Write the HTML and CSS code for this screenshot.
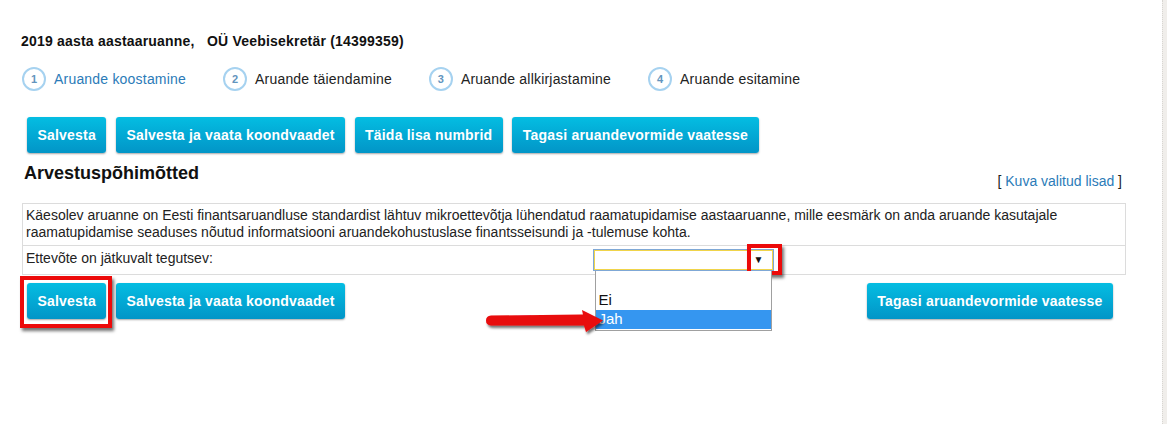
FILE: index.html
```html
<!DOCTYPE html>
<html lang="et">
<head>
<meta charset="utf-8">
<title>2019 aasta aastaaruanne</title>
<link rel="stylesheet" href="styles.css">
</head>
<body>
<div class="shell">
  <div class="main">
    <h1 class="title">2019 aasta aastaaruanne,&nbsp;&nbsp; OÜ Veebisekretär (14399359)</h1>
    <ol class="steps">
      <li class="step active"><span class="num">1</span>Aruande koostamine</li>
      <li class="step"><span class="num">2</span>Aruande täiendamine</li>
      <li class="step"><span class="num">3</span>Aruande allkirjastamine</li>
      <li class="step"><span class="num">4</span>Aruande esitamine</li>
    </ol>
    <div class="btnrow top">
      <button class="btn">Salvesta</button>
      <button class="btn">Salvesta ja vaata koondvaadet</button>
      <button class="btn">Täida lisa numbrid</button>
      <button class="btn">Tagasi aruandevormide vaatesse</button>
    </div>
    <div class="section-head">
      <h2 class="heading">Arvestuspõhimõtted</h2>
      <div class="lisad">[ <a href="#">Kuva valitud lisad</a> ]</div>
    </div>
    <table class="grid">
      <tr>
        <td colspan="2">Käesolev aruanne on Eesti finantsaruandluse standardist lähtuv mikroettevõtja lühendatud raamatupidamise aastaaruanne, mille eesmärk on anda aruande kasutajale raamatupidamise seaduses nõutud informatsiooni aruandekohustuslase finantsseisundi ja -tulemuse kohta.</td>
      </tr>
      <tr>
        <td class="label">Ettevõte on jätkuvalt tegutsev:</td>
        <td class="field">
          <div class="select-wrap">
            <div class="select"><span class="arrow">▼</span></div>
            <div class="arrow-hl"></div>
            <ul class="options">
              <li class="opt blank"></li>
              <li class="opt">Ei</li>
              <li class="opt sel">Jah</li>
            </ul>
          </div>
        </td>
      </tr>
    </table>
    <div class="btnrow bottom">
      <div class="hl-wrap">
        <button class="btn">Salvesta</button>
        <div class="btn-hl"></div>
      </div>
      <button class="btn">Salvesta ja vaata koondvaadet</button>
      <button class="btn push">Tagasi aruandevormide vaatesse</button>
      <svg class="pointer" width="130" height="42" viewBox="0 0 130 42">
        <defs>
          <filter id="sh" x="-10%" y="-30%" width="130%" height="170%">
            <feDropShadow dx="1.5" dy="2.5" stdDeviation="1.2" flood-color="#000" flood-opacity="0.55"/>
          </filter>
        </defs>
        <path filter="url(#sh)" fill="#e8080a" d="M8 15.5 L100 14.5 L99 10 L120 20.5 L103 32 L101 25.5 L8 25.5 Q3 25 3 20.5 Q3 16 8 15.5 Z"/>
      </svg>
    </div>
  </div>
  <div class="scroll"></div>
</div>
</body>
</html>
```
FILE: styles.css
```css
* { box-sizing: border-box; }
html, body { margin: 0; padding: 0; background: #fff; }
body {
  font-family: "Liberation Sans", Arial, sans-serif;
  color: #1a1a1a;
  height: 424px;
  overflow: hidden;
}
.shell { display: flex; height: 424px; }
.main { flex: 1; padding: 33px 36px 0 22px; position: relative; }
.scroll {
  width: 5px;
  background: #f0eeeb;
  border-left: 1px dotted #d8d6d2;
}

.title {
  margin: 0 0 0 -1px;
  font-size: 14px;
  letter-spacing: 0.2px;
  line-height: 16px;
  font-weight: bold;
  color: #111;
}

.steps {
  list-style: none;
  margin: 18px 0 0 0;
  padding: 0;
  display: flex;
  gap: 37px;
  height: 24px;
  align-items: center;
}
.step {
  display: flex;
  align-items: center;
  gap: 8px;
  font-size: 14px;
  letter-spacing: 0.2px;
  color: #222;
}
.step.active { color: #2b7bb8; }
.num {
  width: 24px;
  height: 24px;
  border: 2px solid #a6d2f0;
  border-radius: 50%;
  display: flex;
  align-items: center;
  justify-content: center;
  font-size: 11px;
  font-weight: bold;
  letter-spacing: 0;
  color: #6294bd;
}

.btnrow { display: flex; gap: 9.5px; align-items: center; }
.btnrow.top { margin: 26px 0 0 5px; }
.btn {
  font-family: "Liberation Sans", Arial, sans-serif;
  font-size: 14px;
  letter-spacing: 0.2px;
  font-weight: bold;
  color: #fff;
  height: 36px;
  padding: 0 10.5px;
  border: 0;
  border-radius: 3px;
  background: linear-gradient(#04bde2, #0295c7);
  box-shadow: 0 1px 2px rgba(0, 0, 0, 0.35);
  cursor: pointer;
}

.section-head {
  display: flex;
  justify-content: space-between;
  align-items: flex-start;
  margin-top: 10px;
}
.heading {
  margin: 0 0 0 2px;
  font-size: 18px;
  line-height: 21px;
  font-weight: bold;
  color: #111;
}
.lisad {
  font-size: 14px;
  line-height: 16px;
  margin-top: 10px;
  color: #222;
  padding-right: 4px;
}
.lisad a { color: #2b7bb8; text-decoration: none; }

.grid {
  width: 1104px;
  border-collapse: collapse;
  margin-top: 14px;
  font-size: 14px;
  line-height: 17px;
  color: #222;
}
.grid td {
  border: 1px solid #dcdcdc;
  padding: 3px 3px 4px 3px;
  vertical-align: top;
}
.grid td.label { width: 570px; height: 29px; padding-top: 4px; border-right: 0; }
.grid td.field { border-left: 0; padding: 3px 0 0 0; }

.select-wrap { position: relative; width: 181px; height: 22px; }
.select {
  width: 181px;
  height: 22px;
  background: #fff;
  border: 1px solid #7fa8d6;
  box-shadow: inset 0 0 0 1px #f0d44a;
  position: relative;
}
.arrow {
  position: absolute;
  right: 9px;
  top: 4px;
  font-size: 10px;
  line-height: 12px;
  color: #111;
}
.arrow-hl {
  position: absolute;
  left: 154px;
  top: -5px;
  width: 35px;
  height: 31px;
  border: 4px solid #ec0a0a;
  box-shadow: 2px 3px 3px rgba(0, 0, 0, 0.55);
}
.options {
  position: absolute;
  left: 2px;
  top: 22px;
  width: 177px;
  margin: 0;
  padding: 0;
  list-style: none;
  background: #fff;
  border: 1px solid #a0a0a0;
  border-top: 0;
  font-size: 15px;
  line-height: 18px;
  color: #111;
  z-index: 2;
}
.opt { padding: 0 0 0 3px; height: 19px; }
.opt.blank { height: 20px; }
.opt.sel { background: #3596f0; color: #fff; margin-bottom: 1px; }

.btnrow.bottom { margin: 8px 13px 0 5px; position: relative; }
.hl-wrap { position: relative; display: flex; }
.btn-hl {
  position: absolute;
  left: -7px;
  top: -7px;
  right: -6px;
  bottom: -9px;
  border: 4px solid #ec0a0a;
  box-shadow: 2px 3px 3px rgba(0, 0, 0, 0.55);
  pointer-events: none;
}
.btn.push { margin-left: auto; }
.pointer {
  position: absolute;
  left: 456px;
  top: 17px;
  z-index: 3;
}
```
